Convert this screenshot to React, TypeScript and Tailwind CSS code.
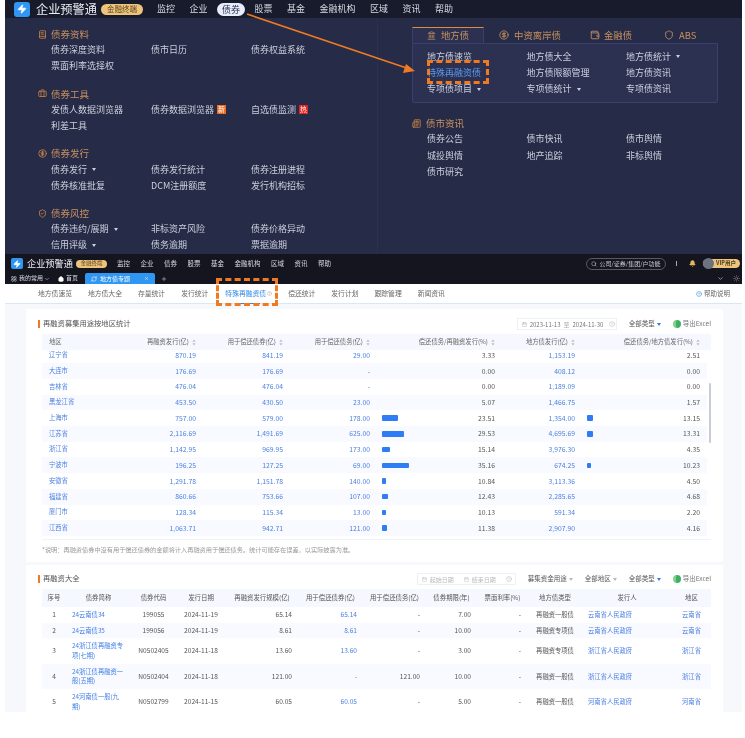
import { Bell, BookText, Briefcase, ChevronDown, CircleDollarSign, CircleHelp, Home, Landmark, Newspaper, Plus, Search, ShieldCheck, X, Zap, Calendar, LayoutGrid, Wallet, Shield, Sun, RefreshCw } from 'lucide-react';

const menuSections = [
  { title: '债券资料', icon: BookText, rows: [['债券深度资料', '债市日历', '债券权益系统'], ['票面利率选择权']] },
  { title: '债券工具', icon: Briefcase, rows: [['发债人数据浏览器', '债券数据浏览器|新', '自选债监测|热'], ['利差工具']] },
  { title: '债券发行', icon: CircleDollarSign, rows: [['债券发行 ▾', '债券发行统计', '债券注册进程'], ['债券核准批复', 'DCM注册额度', '发行机构招标']] },
  { title: '债券风控', icon: ShieldCheck, rows: [['债券违约/展期 ▾', '非标资产风险', '债券价格异动'], ['信用评级 ▾', '债务逾期', '票据逾期']] },
];

const localRows = [
  ['地方债速览', '地方债大全', '地方债统计 ▾'],
  ['特殊再融资债', '地方债限额管理', '地方债资讯'],
  ['专项债项目 ▾', '专项债统计 ▾', '专项债资讯'],
];

const newsRows = [
  ['债券公告', '债市快讯', '债市舆情'],
  ['城投舆情', '地产追踪', '非标舆情'],
  ['债市研究'],
];

const regionRows = [
  { name: '辽宁省', a: '870.19', b: '841.19', c: '29.00', d: '3.33', e: '1,153.19', f: '2.51', bar: 0, bar2: 0 },
  { name: '大连市', a: '176.69', b: '176.69', c: '-', d: '0.00', e: '408.12', f: '0.00', bar: 0, bar2: 0 },
  { name: '吉林省', a: '476.04', b: '476.04', c: '-', d: '0.00', e: '1,189.09', f: '0.00', bar: 0, bar2: 0 },
  { name: '黑龙江省', a: '453.50', b: '430.50', c: '23.00', d: '5.07', e: '1,466.75', f: '1.57', bar: 0, bar2: 0 },
  { name: '上海市', a: '757.00', b: '579.00', c: '178.00', d: '23.51', e: '1,354.00', f: '13.15', bar: 16, bar2: 6 },
  { name: '江苏省', a: '2,116.69', b: '1,491.69', c: '625.00', d: '29.53', e: '4,695.69', f: '13.31', bar: 21.5, bar2: 6 },
  { name: '浙江省', a: '1,142.95', b: '969.95', c: '173.00', d: '15.14', e: '3,976.30', f: '4.35', bar: 8, bar2: 0 },
  { name: '宁波市', a: '196.25', b: '127.25', c: '69.00', d: '35.16', e: '674.25', f: '10.23', bar: 26.5, bar2: 3.5 },
  { name: '安徽省', a: '1,291.78', b: '1,151.78', c: '140.00', d: '10.84', e: '3,113.36', f: '4.50', bar: 4, bar2: 0 },
  { name: '福建省', a: '860.66', b: '753.66', c: '107.00', d: '12.43', e: '2,285.65', f: '4.68', bar: 5.5, bar2: 0 },
  { name: '厦门市', a: '128.34', b: '115.34', c: '13.00', d: '10.13', e: '591.34', f: '2.20', bar: 3.5, bar2: 0 },
  { name: '江西省', a: '1,063.71', b: '942.71', c: '121.00', d: '11.38', e: '2,907.90', f: '4.16', bar: 5, bar2: 0 },
];

const bondRows = [
  { no: 1, name: '24云南债34', code: '199055', date: '2024-11-19', size: '65.14', repay: '65.14', debt: '-', term: '7.00', rate: '-', type: '再融资一般债', issuer: '云南省人民政府', area: '云南省', h: 'h-[15.5px]' },
  { no: 2, name: '24云南债35', code: '199056', date: '2024-11-19', size: '8.61', repay: '8.61', debt: '-', term: '10.00', rate: '-', type: '再融资专项债', issuer: '云南省人民政府', area: '云南省', h: 'h-[15.5px]' },
  { no: 3, name: '24浙江债再融资专项(七期)', code: 'N0502405', date: '2024-11-18', size: '13.60', repay: '13.60', debt: '-', term: '3.00', rate: '-', type: '再融资专项债', issuer: '浙江省人民政府', area: '浙江省', h: 'h-[25.5px]' },
  { no: 4, name: '24浙江债再融资一般(五期)', code: 'N0502404', date: '2024-11-18', size: '121.00', repay: '-', debt: '121.00', term: '10.00', rate: '-', type: '再融资一般债', issuer: '浙江省人民政府', area: '浙江省', h: 'h-[25.5px]' },
  { no: 5, name: '24河南债一般(九期)', code: 'N0502799', date: '2024-11-15', size: '60.05', repay: '60.05', debt: '-', term: '5.00', rate: '-', type: '再融资一般债', issuer: '河南省人民政府', area: '河南省', h: 'h-[25.5px]' },
];

const topNav = ['监控', '企业', '债券', '股票', '基金', '金融机构', '区域', '资讯', '帮助'];
const subNav = ['地方债速览', '地方债大全', '存量统计', '发行统计', '特殊再融资债', '偿还统计', '发行计划', '跟踪管理', '新闻资讯'];

function SortCaret() {
  return (
    <svg width="4" height="7" viewBox="0 0 4 7" className="ml-[3px] shrink-0">
      <path d="M2 0.5 L3.6 2.8 H0.4 Z M2 6.5 L3.6 4.2 H0.4 Z" fill="#b9bec8" />
    </svg>
  );
}

function MenuItem({ label }: { label: string }) {
  const [raw, badge] = label.split('|');
  const hasCaret = raw.endsWith(' ▾');
  const text = hasCaret ? raw.slice(0, -2) : raw;
  const active = text === '特殊再融资债';
  return (
    <span className={active ? 'flex items-center gap-[3px] text-[#5b9bf0]' : 'flex items-center gap-[3px] text-[#ccd0dc]'}>
      {text}
      {hasCaret && (
        <svg width="4" height="3" viewBox="0 0 4 3" className="ml-[2px]">
          <path d="M0 0 H4 L2 3 Z" fill="#ccd0dc" />
        </svg>
      )}
      {badge === '新' && <span className="flex h-[9px] w-[9px] items-center justify-center bg-[#ee6a1f] text-[7px] leading-none text-white">新</span>}
      {badge === '热' && <span className="flex h-[9px] w-[9px] items-center justify-center bg-[#e2231f] text-[7px] leading-none text-white">热</span>}
    </span>
  );
}

function Logo({ text, size }: { text: string; size: 'big' | 'small' }) {
  const big = size === 'big';
  return (
    <div className={big ? 'flex items-center pl-[9px]' : 'flex items-center pl-[6px]'}>
      <div className={big ? 'flex h-[15px] w-[16px] items-center justify-center rounded-[3px] bg-[#2f97f2]' : 'flex h-[11px] w-[12px] items-center justify-center rounded-[2px] bg-[#2f97f2]'}>
        <Zap className={big ? 'h-[10px] w-[10px] fill-white text-white' : 'h-[8px] w-[8px] fill-white text-white'} />
      </div>
      <span className={big ? 'ml-[6px] text-[12.2px] leading-none text-[#eceef4]' : 'ml-[4px] text-[9.2px] leading-none text-[#eceef4]'}>{text}</span>
      <span className={big ? 'ml-[4px] flex h-[11px] w-[42px] items-center justify-center rounded-full bg-[#eec47d] text-[7.5px] leading-none text-[#5a4420]' : 'ml-[3px] flex h-[8px] w-[31px] items-center justify-center rounded-full bg-[#eec47d] text-[5.5px] leading-none text-[#5a4420]'}>金融终端</span>
    </div>
  );
}

function Excel() {
  return (
    <span className="flex items-center gap-[2px] text-[6.5px] text-[#777]">
      <span className="h-[8px] w-[8px] rounded-full border-l-[3px] border-[#7fd08f] bg-[#3fae64]" />
      导出Excel
    </span>
  );
}

function Dropdown({ label, blue }: { label: string; blue?: boolean }) {
  return (
    <span className="flex items-center text-[6.5px] text-[#555]">
      {label}
      <svg width="4" height="3" viewBox="0 0 4 3" className="ml-[2px]">
        <path d="M0 0 H4 L2 3 Z" fill={blue ? '#2f7df0' : '#b5b9c2'} />
      </svg>
    </span>
  );
}

function CardTitle({ text }: { text: string }) {
  return (
    <div className="flex items-center">
      <span className="h-[8px] w-[2px] bg-[#f07a22]" />
      <span className="ml-[3px] text-[7.3px] leading-none text-[#555]">{text}</span>
    </div>
  );
}

export default function App() {
  return (
    <div className="relative h-[738px] w-[745px] overflow-hidden bg-white pl-[5px] pr-[3px] font-['Noto_Sans_CJK_SC','Noto_Sans',sans-serif] blur-[0.3px]">
      {/* top screenshot: dark menu */}
      <div className="flex h-[18px] items-center bg-[#171b2c]">
        <Logo text="企业预警通" size="big" />
        <div className="ml-[14px] flex items-center gap-[14.5px] text-[9px] text-[#d7dae3]">
          {topNav.map((item) =>
            item === '债券' ? (
              <span key={item} className="-mx-[5px] rounded-full bg-[#e8edfb] px-[5px] leading-[13px] text-[#2b3050]">{item}</span>
            ) : (
              <span key={item}>{item}</span>
            ),
          )}
        </div>
      </div>
      <div className="flex h-[236px] bg-[#262b48] text-[9px]">
        <div className="flex w-[373px] flex-col gap-[11.7px] border-r border-[#2b3052] pl-[33px] pt-[8px]">
          {menuSections.map((section) => (
            <div key={section.title}>
              <div className="flex h-[16px] items-center text-[9.5px] text-[#c9915f]">
                <section.icon className="h-[9px] w-[9px] text-[#d58a45]" />
                <span className="ml-[4px]">{section.title}</span>
              </div>
              {section.rows.map((row) => (
                <div key={row[0]} className="grid h-[16px] grid-cols-[100px_100px_100px] items-center pl-[13px]">
                  {row.map((cell) => (
                    <MenuItem key={cell} label={cell} />
                  ))}
                </div>
              ))}
            </div>
          ))}
        </div>
        <div className="pl-[34px] pt-[9px]">
          <div className="flex h-[16px] text-[9.4px] text-[#c9915f]">
            <div className="flex w-[72px] items-center justify-center gap-[5px] border-x border-t border-[#384070] border-t-[#e08a3c] bg-[#2c3152]">
              <Landmark className="h-[9px] w-[9px]" />
              地方债
            </div>
            <div className="ml-[15px] flex items-center gap-[5px]">
              <CircleDollarSign className="h-[10px] w-[10px]" />
              中资离岸债
            </div>
            <div className="ml-[29px] flex items-center gap-[4px]">
              <Wallet className="h-[10px] w-[10px]" />
              金融债
            </div>
            <div className="ml-[32px] flex items-center gap-[5px]">
              <Shield className="h-[10px] w-[10px]" />
              ABS
            </div>
          </div>
          <div className="h-[60px] w-[306px] rounded-b-[2px] border border-[#384070] bg-[#2c3152] pl-[14px] pt-[4.5px]">
            {localRows.map((row) => (
              <div key={row[0]} className="grid h-[16.3px] grid-cols-[99.5px_99.5px_99.5px] items-center">
                {row.map((cell) => (
                  <MenuItem key={cell} label={cell} />
                ))}
              </div>
            ))}
          </div>
          <div className="mt-[12px] flex h-[16px] items-center text-[9.5px] text-[#c9915f]">
            <Newspaper className="h-[9px] w-[9px] text-[#d58a45]" />
            <span className="ml-[5px]">债市资讯</span>
          </div>
          {newsRows.map((row) => (
            <div key={row[0]} className="grid h-[16.4px] grid-cols-[99.5px_99.5px_99.5px] items-center pl-[15px]">
              {row.map((cell) => (
                <MenuItem key={cell} label={cell} />
              ))}
            </div>
          ))}
        </div>
      </div>

      {/* second screenshot: app chrome */}
      <div className="flex h-[19px] items-center bg-[#14151f]">
        <Logo text="企业预警通" size="small" />
        <div className="ml-[10px] flex items-center gap-[10.5px] text-[6.5px] text-[#d7dae3]">
          {topNav.map((item) => (
            <span key={item}>{item}</span>
          ))}
        </div>
        <div className="ml-auto flex items-center pr-[2px]">
          <div className="flex h-[12px] w-[80px] items-center justify-center gap-[2px] rounded-full border border-[#555a68] text-[6px] text-[#c9ccd6]">
            <Search className="h-[6px] w-[6px]" />
            公司/证券/集团/户功能
          </div>
          <span className="ml-[10px] h-[5px] w-px bg-[#aaa]" />
          <Bell className="ml-[12px] h-[7px] w-[7px] fill-[#e9b75a] text-[#e9b75a]" />
          <div className="ml-[7px] flex h-[9px] w-[37px] items-center rounded-full bg-[#eec47d] text-[5.5px] font-bold leading-none text-[#4b3a1c]">
            <span className="mr-[2px] h-[11px] w-[11px] rounded-full bg-[#6c7280]" />
            VIP用户
          </div>
        </div>
      </div>
      <div className="flex h-[11px] items-end bg-[#14151f] text-[6px] text-[#d7dae3]">
        <LayoutGrid className="mb-[2px] ml-[6px] h-[6px] w-[6px]" />
        <span className="mb-[2px] ml-[2px]">我的常用</span>
        <ChevronDown className="mb-[2px] ml-[1px] h-[6px] w-[6px]" />
        <Home className="mb-[2px] ml-[8px] h-[6px] w-[6px] fill-white text-white" />
        <span className="mb-[2px] ml-[2px]">首页</span>
        <div className="ml-[7px] flex h-[11px] w-[70px] items-center rounded-t-[2px] bg-[#2f97f2] pl-[6px] text-white">
          <RefreshCw className="h-[6px] w-[6px]" />
          <span className="ml-[3px]">地方债专题</span>
          <X className="ml-auto mr-[6px] h-[5px] w-[5px]" />
        </div>
        <Plus className="mb-[2px] ml-[6px] h-[6px] w-[6px]" />
        <ChevronDown className="mb-[2px] ml-auto h-[7px] w-[7px]" />
        <Sun className="mb-[2px] ml-[9px] mr-[2px] h-[7px] w-[7px] text-[#888]" />
      </div>
      <div className="flex h-[20px] items-center border-b border-[#dbe7f8] bg-white pl-[33px] text-[6.8px] text-[#666]">
        <div className="flex gap-[16px]">
          {subNav.map((item) =>
            item === '特殊再融资债' ? (
              <span key={item} className="relative ml-[1px] flex items-center text-[#2f86e8]">
                {item}
                <CircleHelp className="ml-[1px] h-[5px] w-[5px] text-[#aaa]" />
                <span className="absolute -bottom-[5px] left-[12px] h-[1px] w-[23px] bg-[#2f86e8]" />
              </span>
            ) : (
              <span key={item}>{item}</span>
            ),
          )}
        </div>
        <span className="ml-auto flex items-center gap-[2px] pr-[12px] text-[6.5px]">
          <CircleHelp className="h-[6px] w-[6px] text-[#2f86e8]" />
          帮助说明
        </span>
      </div>

      {/* page body, cut off at the bottom of the screenshot */}
      <div className="h-[408px] overflow-hidden bg-[#f6f8fc] pl-[21px] pr-[19px] pt-[5px]">
        <div className="h-[253px] bg-white pl-[12px] pr-[12px] pt-[9px]">
          <div className="flex h-[12px] items-center">
            <CardTitle text="再融资募集用途按地区统计" />
            <div className="ml-auto flex items-center">
              <div className="flex h-[12px] w-[100px] items-center gap-[3px] border border-[#eef0f4] pl-[4px] text-[6px] text-[#777]">
                <Calendar className="h-[5px] w-[5px] text-[#aaa]" />
                2023-11-13 <span className="text-[#aaa]">至</span> 2024-11-30
                <CircleHelp className="ml-[3px] h-[6px] w-[6px] text-[#bbb]" />
              </div>
              <div className="ml-[12px]"><Dropdown label="全部类型" blue /></div>
              <div className="ml-[12px]"><Excel /></div>
            </div>
          </div>

          <div className="relative ml-[4px] mt-[4px]">
            <div className="grid h-[16px] grid-cols-[80px_80px_87px_87px_125px_81px_129px] items-center bg-[#f5f8fe] text-[6.3px] text-[#666]">
              <span className="pl-[7px]">地区</span>
              <span className="flex items-center justify-end pr-[6px]">再融资发行(亿)<SortCaret /></span>
              <span className="flex items-center justify-end pr-[6px]">用于偿还债券(亿)<SortCaret /></span>
              <span className="flex items-center justify-end pr-[6px]">用于偿还债务(亿)<SortCaret /></span>
              <span className="flex items-center justify-end pr-[6px]">偿还债务/再融资发行(%)<SortCaret /></span>
              <span className="flex items-center justify-end pr-[7px]">地方债发行(亿)<SortCaret /></span>
              <span className="flex items-center justify-end pr-[11px]">偿还债务/地方债发行(%)<SortCaret /></span>
            </div>
            <div className="h-[190px] overflow-hidden border-b border-[#f0f3f8]">
              <div className="-mt-[2.6px]">
                {regionRows.map((row, i) => (
                  <div key={row.name} className={i % 2 === 1 ? 'mr-[4px] grid h-[15.72px] grid-cols-[80px_80px_87px_87px_125px_81px_125px] items-center bg-[#f8faff] text-[6.8px] leading-none' : 'mr-[4px] grid h-[15.72px] grid-cols-[80px_80px_87px_87px_125px_81px_125px] items-center text-[6.8px] leading-none'}>
                    <span className="pl-[7px] text-[6.3px] text-[#4a7fe0]">{row.name}</span>
                    <span className="pr-[6px] text-right text-[#4a7fe0]">{row.a}</span>
                    <span className="pr-[6px] text-right text-[#4a7fe0]">{row.b}</span>
                    <span className="pr-[6px] text-right text-[#4a7fe0]">{row.c}</span>
                    <span className="flex items-center justify-between pl-[6px] pr-[6px] text-[#555]">
                      <span className="h-[5.5px] rounded-[1px] bg-[#2f7df5]" style={{ width: row.bar }} />
                      {row.d}
                    </span>
                    <span className="pr-[7px] text-right text-[#4a7fe0]">{row.e}</span>
                    <span className="flex items-center justify-between pl-[5px] pr-[7px] text-[#555]">
                      <span className="h-[5.5px] rounded-[1px] bg-[#2f7df5]" style={{ width: row.bar2 }} />
                      {row.f}
                    </span>
                  </div>
                ))}
              </div>
            </div>
            <span className="absolute left-[667px] top-[49px] h-[60px] w-[2px] rounded-full bg-[#c8ccd8]" />
          </div>
          <p className="ml-[4px] mt-[6px] text-[6.2px] leading-[8px] text-[#999]">*说明：再融资债券中没有用于偿还债券的金额将计入再融资用于偿还债务。统计可能存在误差，以实际披露为准。</p>
        </div>

        <div className="mt-[3px] h-[160px] bg-white pl-[12px] pr-[12px] pt-[8px]">
          <div className="flex h-[12px] items-center">
            <CardTitle text="再融资大全" />
            <div className="ml-auto flex items-center">
              <div className="flex h-[12px] w-[99px] items-center border border-[#eef0f4] pl-[4px] text-[6px] text-[#bbb]">
                <Calendar className="h-[5px] w-[5px]" />
                <span className="ml-[3px]">起始日期</span>
                <Calendar className="ml-[10px] h-[5px] w-[5px]" />
                <span className="ml-[3px]">结束日期</span>
                <CircleHelp className="ml-[10px] h-[6px] w-[6px]" />
              </div>
              <div className="ml-[12px]"><Dropdown label="募集资金用途" /></div>
              <div className="ml-[12px]"><Dropdown label="全部地区" /></div>
              <div className="ml-[12px]"><Dropdown label="全部类型" blue /></div>
              <div className="ml-[12px]"><Excel /></div>
            </div>
          </div>
          <div className="ml-[4px] mt-[4px]">
            <div className="grid h-[18px] grid-cols-[24px_65px_45px_50px_72px_65px_63px_51px_51px_54px_90px_39px] items-center bg-[#f5f8fe] text-center text-[6.4px] text-[#555]">
              <span>序号</span>
              <span>债券简称</span>
              <span>债券代码</span>
              <span>发行日期</span>
              <span>再融资发行规模(亿)</span>
              <span>用于偿还债券(亿)</span>
              <span>用于偿还债务(亿)</span>
              <span>债券期限(年)</span>
              <span>票面利率(%)</span>
              <span>地方债类型</span>
              <span>发行人</span>
              <span>地区</span>
            </div>
            {bondRows.map((row) => (
              <div key={row.no} className={`grid ${row.h} grid-cols-[24px_65px_45px_50px_72px_65px_63px_51px_51px_54px_90px_39px] items-center text-[6.6px] leading-[9.5px] text-[#555] ${row.no % 2 === 0 ? 'bg-[#f8faff]' : ''}`}>
                <span className="text-center">{row.no}</span>
                <span className="px-[6px] text-[6.3px] text-[#3f7ee6]">{row.name}</span>
                <span className="text-center">{row.code}</span>
                <span className="text-center">{row.date}</span>
                <span className="pr-[6px] text-right">{row.size}</span>
                <span className="pr-[6px] text-right text-[#4a7fe0]">{row.repay}</span>
                <span className="pr-[6px] text-right">{row.debt}</span>
                <span className="pr-[6px] text-right">{row.term}</span>
                <span className="pr-[7px] text-right">{row.rate}</span>
                <span className="text-center text-[6.3px]">{row.type}</span>
                <span className="pl-[6px] text-[6.3px] text-[#4a7fe0]">{row.issuer}</span>
                <span className="text-center text-[6.3px] text-[#4a7fe0]">{row.area}</span>
              </div>
            ))}
          </div>
        </div>
      </div>

      {/* annotations laid over the screenshots */}
      <svg className="pointer-events-none absolute left-0 top-0" width="745" height="100" viewBox="0 0 745 100">
        <path d="M247 14 L408 68.5" stroke="#f07a22" strokeWidth="1.6" fill="none" />
        <path d="M415 71 L403 73 L406 64 Z" fill="#f07a22" />
      </svg>
      <div className="absolute left-[427px] top-[60px] h-[24px] w-[62px] border-[3px] border-dashed border-[#f07a22]" />
      <div className="absolute left-[216px] top-[278px] h-[28px] w-[62px] border-[3px] border-dashed border-[#f07a22]" />
    </div>
  );
}
